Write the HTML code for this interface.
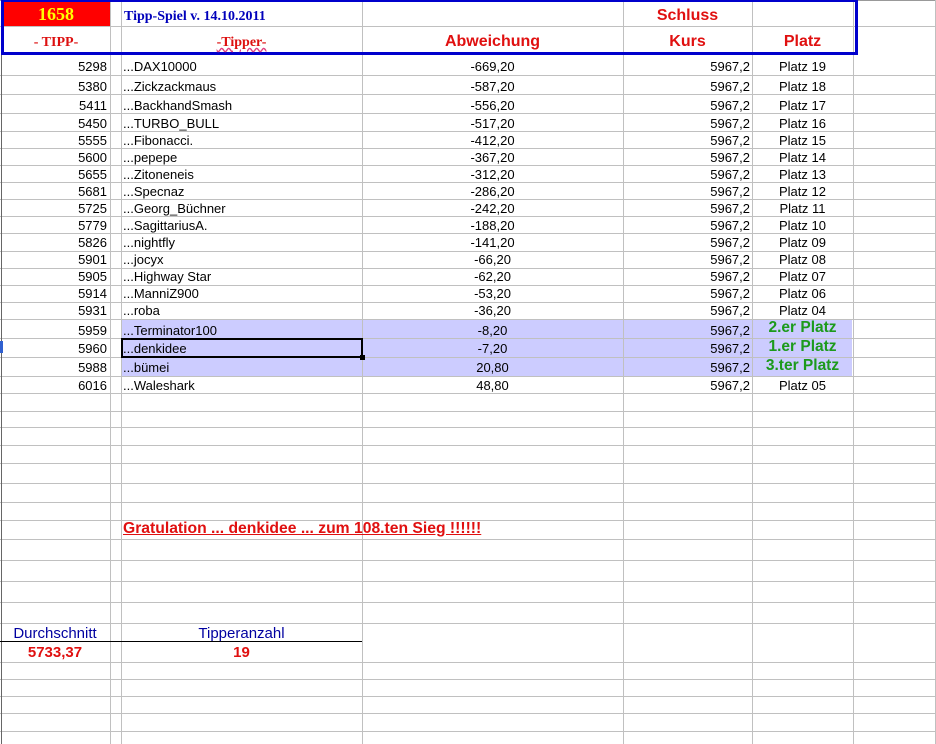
<!DOCTYPE html>
<html><head><meta charset="utf-8"><style>
body{margin:0;width:936px;height:744px;overflow:hidden;background:#fff;position:relative;font-family:"Liberation Sans",Arial,sans-serif;font-size:13px;color:#000}
.h{position:absolute;left:0;width:936px;height:1px;background:#c0c0c0}
.v{position:absolute;top:0;width:1px;height:744px;background:#c0c0c0}
.c{position:absolute;white-space:nowrap;line-height:17px}
.r{text-align:right}
.m{text-align:center}
.hl{position:absolute;left:121px;width:731px;background:#ccccff}
.g{color:#1c9a1c;font-weight:bold;font-size:15.5px}
.hd{color:#e01010;font-weight:bold;font-size:16px}
.d{margin-top:1px}
</style></head><body>
<div class="hl" style="top:319px;height:57px"></div>

<div class="h" style="top:0;background:#999"></div>
<div class="h" style="top:26px"></div>
<div class="h" style="top:75px"></div>
<div class="h" style="top:94px"></div>
<div class="h" style="top:113px"></div>
<div class="h" style="top:131px"></div>
<div class="h" style="top:148px"></div>
<div class="h" style="top:165px"></div>
<div class="h" style="top:182px"></div>
<div class="h" style="top:199px"></div>
<div class="h" style="top:216px"></div>
<div class="h" style="top:233px"></div>
<div class="h" style="top:251px"></div>
<div class="h" style="top:268px"></div>
<div class="h" style="top:285px"></div>
<div class="h" style="top:302px"></div>
<div class="h" style="top:319px"></div>
<div class="h" style="top:338px"></div>
<div class="h" style="top:357px"></div>
<div class="h" style="top:376px"></div>
<div class="h" style="top:393px"></div>
<div class="h" style="top:411px"></div>
<div class="h" style="top:427px"></div>
<div class="h" style="top:445px"></div>
<div class="h" style="top:463px"></div>
<div class="h" style="top:483px"></div>
<div class="h" style="top:502px"></div>
<div class="h" style="top:520px"></div>
<div class="h" style="top:539px"></div>
<div class="h" style="top:560px"></div>
<div class="h" style="top:581px"></div>
<div class="h" style="top:602px"></div>
<div class="h" style="top:623px"></div>
<div class="h" style="top:662px"></div>
<div class="h" style="top:679px"></div>
<div class="h" style="top:696px"></div>
<div class="h" style="top:713px"></div>
<div class="h" style="top:731px"></div>

<div class="v" style="left:1px;background:#666"></div>
<div class="v" style="left:110px"></div>
<div class="v" style="left:121px"></div>
<div class="v" style="left:362px"></div>
<div class="v" style="left:623px"></div>
<div class="v" style="left:752px"></div>
<div class="v" style="left:853px"></div>
<div class="v" style="left:935px"></div>

<div style="position:absolute;left:2px;top:2px;width:108px;height:24px;background:#ff0000"></div>
<div style="position:absolute;top:0;width:851px;height:50px;border:3px solid #0000cc;border-top-width:2px;box-sizing:content-box;left:1px"></div>
<div style="position:absolute;left:0;top:641px;width:362px;height:1px;background:#000"></div>
<div style="position:absolute;left:0;top:341px;width:3px;height:12px;background:#3060d0"></div>

<div class="c m" style="left:2px;width:108px;top:4px;line-height:20px;font-family:'Liberation Serif',serif;font-weight:bold;font-size:18px;color:#ffff00">1658</div>
<div class="c" style="left:124px;top:8px;font-family:'Liberation Serif',serif;font-weight:bold;font-size:14px;color:#0000bb">Tipp-Spiel v. 14.10.2011</div>
<div class="c m" style="left:623px;width:129px;top:7px" ><span class="hd">Schluss</span></div>
<div class="c m" style="left:2px;width:108px;top:34px;font-family:'Liberation Serif',serif;font-weight:bold;font-size:14px;color:#dd1010">- TIPP-</div>
<div class="c m" style="left:121px;width:241px;top:34px;font-family:'Liberation Serif',serif;font-weight:bold;font-size:14px;color:#dd1010;text-decoration:underline wavy #e04080">-Tipper-</div>
<div class="c m" style="left:362px;width:261px;top:33px"><span class="hd">Abweichung</span></div>
<div class="c m" style="left:623px;width:129px;top:33px"><span class="hd">Kurs</span></div>
<div class="c m" style="left:752px;width:101px;top:33px"><span class="hd">Platz</span></div>

<div class="c r" style="left:0;width:107px;top:58px">5298</div><div class="c" style="left:123px;top:58px">...DAX10000</div><div class="c m" style="left:362px;width:261px;top:58px">-669,20</div><div class="c r" style="left:623px;width:127px;top:58px">5967,2</div><div class="c m" style="left:752px;width:101px;top:58px">Platz 19</div>
<div class="c r" style="left:0;width:107px;top:78px">5380</div><div class="c" style="left:123px;top:78px">...Zickzackmaus</div><div class="c m" style="left:362px;width:261px;top:78px">-587,20</div><div class="c r" style="left:623px;width:127px;top:78px">5967,2</div><div class="c m" style="left:752px;width:101px;top:78px">Platz 18</div>
<div class="c r" style="left:0;width:107px;top:97px">5411</div><div class="c" style="left:123px;top:97px">...BackhandSmash</div><div class="c m" style="left:362px;width:261px;top:97px">-556,20</div><div class="c r" style="left:623px;width:127px;top:97px">5967,2</div><div class="c m" style="left:752px;width:101px;top:97px">Platz 17</div>
<div class="c r" style="left:0;width:107px;top:115px">5450</div><div class="c" style="left:123px;top:115px">...TURBO_BULL</div><div class="c m" style="left:362px;width:261px;top:115px">-517,20</div><div class="c r" style="left:623px;width:127px;top:115px">5967,2</div><div class="c m" style="left:752px;width:101px;top:115px">Platz 16</div>
<div class="c r" style="left:0;width:107px;top:132px">5555</div><div class="c" style="left:123px;top:132px">...Fibonacci.</div><div class="c m" style="left:362px;width:261px;top:132px">-412,20</div><div class="c r" style="left:623px;width:127px;top:132px">5967,2</div><div class="c m" style="left:752px;width:101px;top:132px">Platz 15</div>
<div class="c r" style="left:0;width:107px;top:149px">5600</div><div class="c" style="left:123px;top:149px">...pepepe</div><div class="c m" style="left:362px;width:261px;top:149px">-367,20</div><div class="c r" style="left:623px;width:127px;top:149px">5967,2</div><div class="c m" style="left:752px;width:101px;top:149px">Platz 14</div>
<div class="c r" style="left:0;width:107px;top:166px">5655</div><div class="c" style="left:123px;top:166px">...Zitoneneis</div><div class="c m" style="left:362px;width:261px;top:166px">-312,20</div><div class="c r" style="left:623px;width:127px;top:166px">5967,2</div><div class="c m" style="left:752px;width:101px;top:166px">Platz 13</div>
<div class="c r" style="left:0;width:107px;top:183px">5681</div><div class="c" style="left:123px;top:183px">...Specnaz</div><div class="c m" style="left:362px;width:261px;top:183px">-286,20</div><div class="c r" style="left:623px;width:127px;top:183px">5967,2</div><div class="c m" style="left:752px;width:101px;top:183px">Platz 12</div>
<div class="c r" style="left:0;width:107px;top:200px">5725</div><div class="c" style="left:123px;top:200px">...Georg_Büchner</div><div class="c m" style="left:362px;width:261px;top:200px">-242,20</div><div class="c r" style="left:623px;width:127px;top:200px">5967,2</div><div class="c m" style="left:752px;width:101px;top:200px">Platz 11</div>
<div class="c r" style="left:0;width:107px;top:217px">5779</div><div class="c" style="left:123px;top:217px">...SagittariusA.</div><div class="c m" style="left:362px;width:261px;top:217px">-188,20</div><div class="c r" style="left:623px;width:127px;top:217px">5967,2</div><div class="c m" style="left:752px;width:101px;top:217px">Platz 10</div>
<div class="c r" style="left:0;width:107px;top:234px">5826</div><div class="c" style="left:123px;top:234px">...nightfly</div><div class="c m" style="left:362px;width:261px;top:234px">-141,20</div><div class="c r" style="left:623px;width:127px;top:234px">5967,2</div><div class="c m" style="left:752px;width:101px;top:234px">Platz 09</div>
<div class="c r" style="left:0;width:107px;top:251px">5901</div><div class="c" style="left:123px;top:251px">...jocyx</div><div class="c m" style="left:362px;width:261px;top:251px">-66,20</div><div class="c r" style="left:623px;width:127px;top:251px">5967,2</div><div class="c m" style="left:752px;width:101px;top:251px">Platz 08</div>
<div class="c r" style="left:0;width:107px;top:268px">5905</div><div class="c" style="left:123px;top:268px">...Highway Star</div><div class="c m" style="left:362px;width:261px;top:268px">-62,20</div><div class="c r" style="left:623px;width:127px;top:268px">5967,2</div><div class="c m" style="left:752px;width:101px;top:268px">Platz 07</div>
<div class="c r" style="left:0;width:107px;top:285px">5914</div><div class="c" style="left:123px;top:285px">...ManniZ900</div><div class="c m" style="left:362px;width:261px;top:285px">-53,20</div><div class="c r" style="left:623px;width:127px;top:285px">5967,2</div><div class="c m" style="left:752px;width:101px;top:285px">Platz 06</div>
<div class="c r" style="left:0;width:107px;top:302px">5931</div><div class="c" style="left:123px;top:302px">...roba</div><div class="c m" style="left:362px;width:261px;top:302px">-36,20</div><div class="c r" style="left:623px;width:127px;top:302px">5967,2</div><div class="c m" style="left:752px;width:101px;top:302px">Platz 04</div>
<div class="c r" style="left:0;width:107px;top:322px">5959</div><div class="c" style="left:123px;top:322px">...Terminator100</div><div class="c m" style="left:362px;width:261px;top:322px">-8,20</div><div class="c r" style="left:623px;width:127px;top:322px">5967,2</div><div class="c m g" style="left:752px;width:101px;top:319px">2.er Platz</div>
<div class="c r" style="left:0;width:107px;top:340px">5960</div><div class="c" style="left:123px;top:340px">...denkidee</div><div class="c m" style="left:362px;width:261px;top:340px">-7,20</div><div class="c r" style="left:623px;width:127px;top:340px">5967,2</div><div class="c m g" style="left:752px;width:101px;top:338px">1.er Platz</div>
<div class="c r" style="left:0;width:107px;top:359px">5988</div><div class="c" style="left:123px;top:359px">...bümei</div><div class="c m" style="left:362px;width:261px;top:359px">20,80</div><div class="c r" style="left:623px;width:127px;top:359px">5967,2</div><div class="c m g" style="left:752px;width:101px;top:357px">3.ter Platz</div>
<div class="c r" style="left:0;width:107px;top:377px">6016</div><div class="c" style="left:123px;top:377px">...Waleshark</div><div class="c m" style="left:362px;width:261px;top:377px">48,80</div><div class="c r" style="left:623px;width:127px;top:377px">5967,2</div><div class="c m" style="left:752px;width:101px;top:377px">Platz 05</div>

<div style="position:absolute;left:121px;top:338px;width:238px;height:16px;border:2px solid #000"></div>
<div style="position:absolute;left:360px;top:355px;width:5px;height:5px;background:#000"></div>

<div class="c" style="left:123px;top:520px;font-weight:bold;font-size:15.7px;color:#e01010;text-decoration:underline">Gratulation ... denkidee ... zum 108.ten Sieg !!!!!!</div>
<div class="c m" style="left:0;width:110px;top:625px;font-size:15px;color:#0000a0">Durchschnitt</div>
<div class="c m" style="left:121px;width:241px;top:625px;font-size:15px;color:#0000a0">Tipperanzahl</div>
<div class="c m" style="left:0;width:110px;top:644px;font-size:15px;font-weight:bold;color:#e01010">5733,37</div>
<div class="c m" style="left:121px;width:241px;top:644px;font-size:15px;font-weight:bold;color:#e01010">19</div>
</body></html>
